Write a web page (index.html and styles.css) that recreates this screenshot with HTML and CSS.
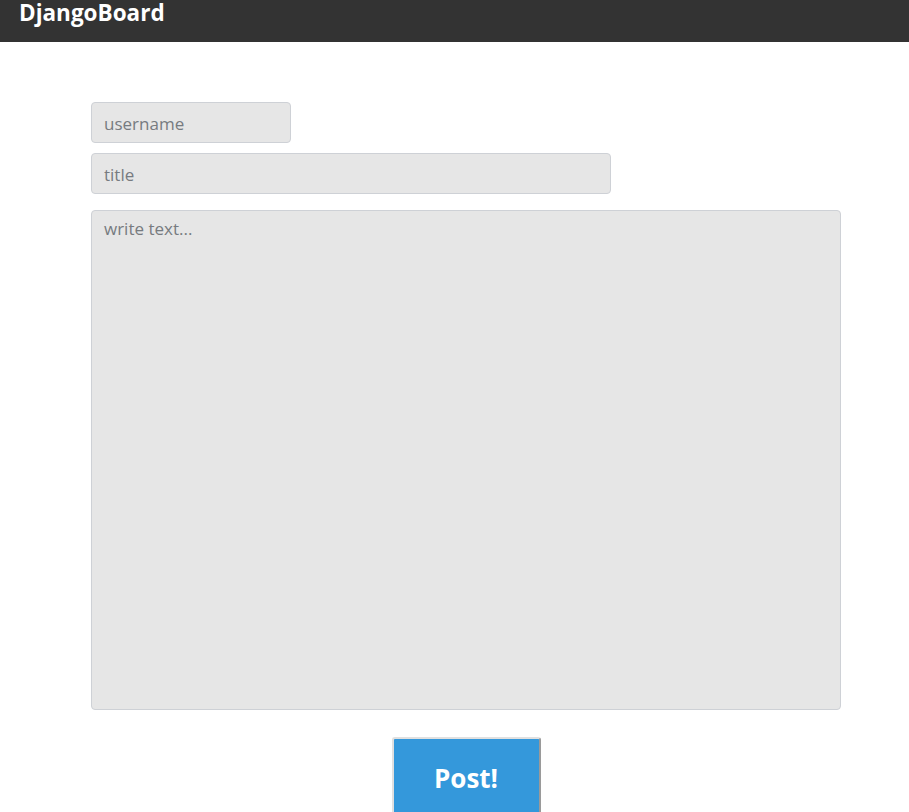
FILE: index.html
```html
<!DOCTYPE html>
<html>
<head>
<meta charset="utf-8">
<title>DjangoBoard</title>
<link rel="stylesheet" href="styles.css">
</head>
<body>
<header class="topbar">
  <span class="brand">DjangoBoard</span>
</header>
<main class="container">
  <form class="post-form">
    <input class="field field-user" type="text" placeholder="username">
    <input class="field field-title" type="text" placeholder="title">
    <textarea class="field field-text" placeholder="write text..."></textarea>
    <div class="actions">
      <button class="post-btn" type="button">Post!</button>
    </div>
  </form>
</main>
</body>
</html>
```
FILE: styles.css
```css
* { box-sizing: border-box; }
html, body { margin: 0; padding: 0; }
body {
  font-family: "Open Sans", "Noto Sans", "Liberation Sans", sans-serif;
  background: #fff;
  overflow: hidden;
}
.topbar {
  height: 42px;
  background: #333333;
  padding-left: 19px;
  padding-top: 0;
  display: flex;
  align-items: flex-start;
}
.brand {
  color: #fff;
  font-weight: 700;
  font-size: 22.5px;
  line-height: 26px;
  margin-top: 0;
}
.container {
  padding-top: 60px;
  padding-left: 91px;
}
.post-form {
  width: 750px;
  display: flex;
  flex-direction: column;
  align-items: flex-start;
}
.field {
  background: #e6e6e6;
  border: 1px solid #ced1d6;
  border-radius: 4px;
  padding: 1px 12px 0 12px;
  font-family: inherit;
  font-size: 17px;
  color: #333;
  outline: none;
}
.field::placeholder { color: #777b80; }
.field-user { width: 200px; height: 41px; }
.field-title { width: 520px; height: 41px; margin-top: 10px; }
.field-text {
  width: 750px;
  height: 500px;
  margin-top: 16px;
  padding-top: 6px;
  resize: none;
  line-height: 24px;
}
.actions {
  width: 100%;
  display: flex;
  justify-content: center;
  margin-top: 27px;
}
.post-btn {
  width: 149px;
  height: 84px;
  background: #3498db;
  color: #fff;
  font-family: inherit;
  font-weight: 700;
  font-size: 26px;
  border-width: 2px;
  border-style: solid;
  border-color: #e0e0e0 #9a9a9a #9a9a9a #e0e0e0;
  border-radius: 3px;
  padding: 0 0 2px 0;
}
```
